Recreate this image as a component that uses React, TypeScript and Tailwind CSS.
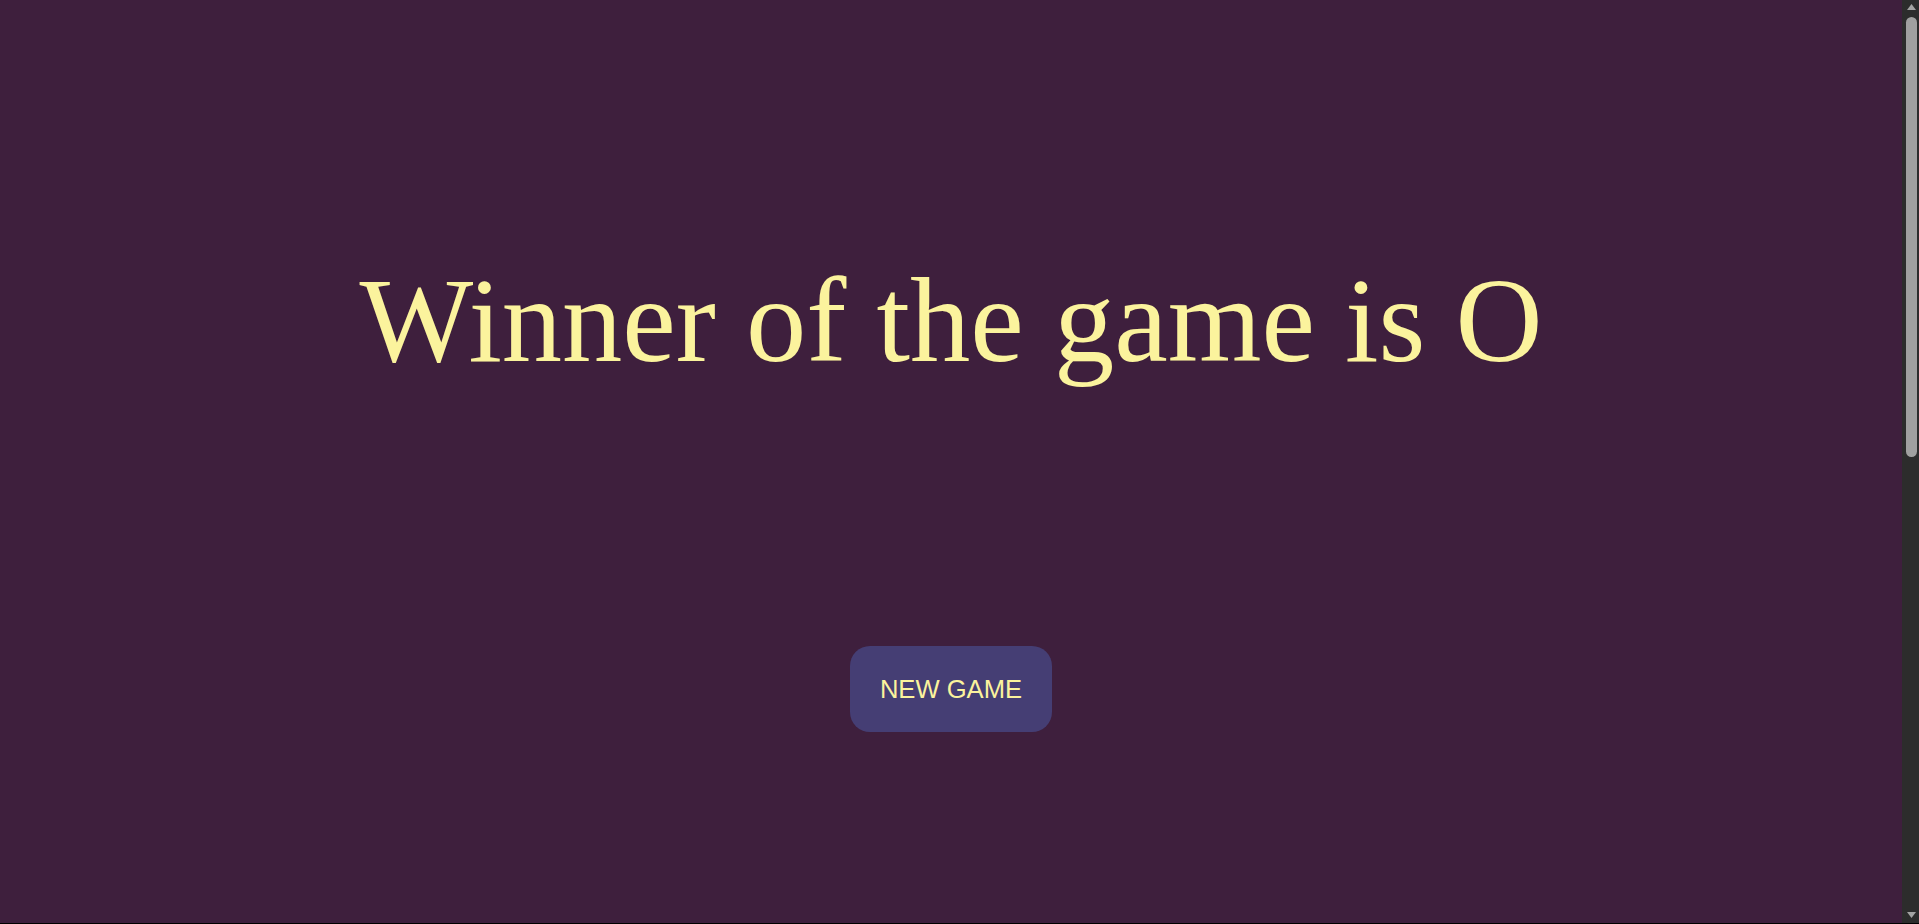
export default function App() {
  return (
    <div className="h-screen w-full flex flex-col overflow-hidden bg-[#3e1f3d]">
      <div className="flex-1 flex min-h-0">
        <main className="flex-1 flex flex-col items-center pt-[251px]">
          <h1 className="text-[120.5px] leading-[139px] text-[#fbf39d] text-center font-normal font-['Liberation_Serif','Times_New_Roman',serif]">
            Winner of the game is O
          </h1>
          <button className="mt-[256px] w-[202px] h-[86px] rounded-[20px] bg-[#453e74] text-[#fbf39d] text-[25.6px] flex items-center justify-center font-['Liberation_Sans',Arial,sans-serif]">
            NEW GAME
          </button>
        </main>
        <div className="w-[17px] bg-[#2c2c2c] flex flex-col items-center pl-px">
          <svg width="11" height="8" viewBox="0 0 11 8" className="mt-[3px] shrink-0">
            <polygon points="5.5,1 10,7 1,7" fill="#a3a3a3" />
          </svg>
          <div className="mt-[6px] w-[11px] h-[440px] rounded-[6px] bg-[#a0a0a0]" />
          <div className="flex-1" />
          <svg width="11" height="8" viewBox="0 0 11 8" className="mb-[4px] shrink-0">
            <polygon points="1,1 10,1 5.5,7" fill="#a3a3a3" />
          </svg>
        </div>
      </div>
      <div className="h-px bg-black" />
    </div>
  );
}
